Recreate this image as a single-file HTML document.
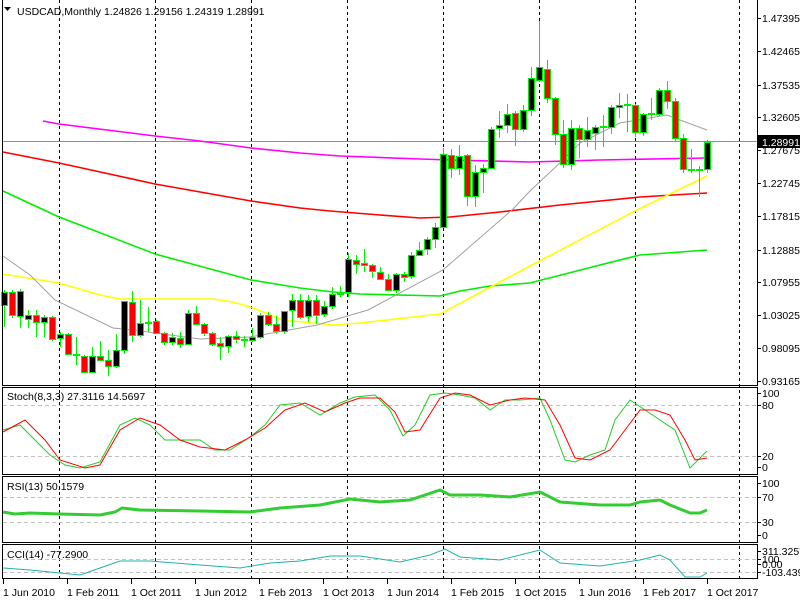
<!DOCTYPE html>
<html><head><meta charset="utf-8"><style>
html,body{margin:0;padding:0;background:#fff;width:800px;height:600px;overflow:hidden}
svg{display:block}
text{font-family:"Liberation Sans",sans-serif;font-size:10.5px;fill:#000}
</style></head><body>
<svg id="s" width="800" height="600" xmlns="http://www.w3.org/2000/svg">
<rect width="800" height="600" fill="#fff"/>
<g id="grid"></g>
<g id="plots"></g>
<g id="cand"></g>
<g stroke="#000" stroke-width="1" fill="none" shape-rendering="crispEdges">
<line x1="2.5" y1="0" x2="2.5" y2="385"/>
<line x1="757.5" y1="0" x2="757.5" y2="385"/>
<line x1="2" y1="385.5" x2="758" y2="385.5"/>
<rect x="2.5" y="387.5" width="755" height="87"/>
<rect x="2.5" y="476.5" width="755" height="66"/>
<rect x="2.5" y="544.5" width="755" height="34"/>
</g>
<g id="ticks" stroke="#000" shape-rendering="crispEdges"></g>
<polygon points="4,7 11,7 7.5,11" fill="#000"/>
<text x="17" y="15">USDCAD,Monthly  1.24826 1.29156 1.24319 1.28991</text>
<text x="7" y="400">Stoch(8,3,3) 27.3116 14.5697</text>
<text x="7" y="490">RSI(13) 50.1579</text>
<text x="7" y="558">CCI(14) -77.2900</text>
<g>
<text x="762" y="22">1.47395</text>
<text x="762" y="55">1.42465</text>
<text x="762" y="89">1.37535</text>
<text x="762" y="121">1.32605</text>
<text x="762" y="154">1.27675</text>
<text x="762" y="187">1.22745</text>
<text x="762" y="220">1.17815</text>
<text x="762" y="254">1.12885</text>
<text x="762" y="286">1.07955</text>
<text x="762" y="319">1.03025</text>
<text x="762" y="352">0.98095</text>
<text x="762" y="385">0.93165</text>
<rect x="758" y="135" width="42" height="13" fill="#000"/>
<text x="762" y="146" style="fill:#fff">1.28991</text>
<text x="762" y="397">100</text>
<text x="762" y="409">80</text>
<text x="762" y="460">20</text>
<text x="762" y="471">0</text>
<text x="762" y="487">100</text>
<text x="762" y="501">70</text>
<text x="762" y="526">30</text>
<text x="762" y="539">0</text>
<text x="762" y="555">311.3257</text>
<text x="762" y="563">100</text>
<text x="762" y="568">0.00</text>
<text x="762" y="576">-103.4397</text>
</g>
<g>
<text x="3" y="596">1 Jun 2010</text>
<text x="67" y="596">1 Feb 2011</text>
<text x="131" y="596">1 Oct 2011</text>
<text x="195" y="596">1 Jun 2012</text>
<text x="259" y="596">1 Feb 2013</text>
<text x="323" y="596">1 Oct 2013</text>
<text x="387" y="596">1 Jun 2014</text>
<text x="451" y="596">1 Feb 2015</text>
<text x="515" y="596">1 Oct 2015</text>
<text x="579" y="596">1 Jun 2016</text>
<text x="643" y="596">1 Feb 2017</text>
<text x="707" y="596">1 Oct 2017</text>
</g>
</svg>
<script>
var NS="http://www.w3.org/2000/svg";
function el(p,t,a){var e=document.createElementNS(NS,t);for(var k in a)e.setAttribute(k,a[k]);document.getElementById(p).appendChild(e);return e;}
function pl(p,pts,c,w){el(p,"polyline",{points:pts.map(function(q){return q.join(",")}).join(" "),fill:"none",stroke:c,"stroke-width":w||1});}
[59,155,251,347,443,539,635,739].forEach(function(x){el("grid","line",{x1:x+.5,y1:0,x2:x+.5,y2:579,stroke:"#000","stroke-dasharray":"3,3","shape-rendering":"crispEdges"});});
[405,456,497,522,559,572].forEach(function(y){el("grid","line",{x1:3,y1:y+.5,x2:757,y2:y+.5,stroke:"#c0c0c0","stroke-dasharray":"4,3","shape-rendering":"crispEdges"});});
el("grid","line",{x1:3,y1:141.5,x2:800,y2:141.5,stroke:"#8a9096","shape-rendering":"crispEdges"});
for(var k=0;k<12;k++){var x=3+64*k+.5;el("ticks","line",{x1:x,y1:579,x2:x,y2:584});}
[18,51,85,117,150,183,216,250,282,315,348,381,393,405,456,467,483,497,522,535,551,559,564,572].forEach(function(y){el("ticks","line",{x1:757,y1:y+.5,x2:761,y2:y+.5});});
pl("plots",[[43,121],[59,124],[155,136],[200,141],[251,148],[300,153],[340,156],[420,159],[450,160],[530,162],[600,160],[707,158]],"#ff00ff",1.6);
pl("plots",[[3,152],[59,163],[155,184],[251,201],[300,208],[330,211],[380,215],[420,218],[450,217],[500,212],[560,205],[640,197],[707,193]],"#ff0000",1.6);
pl("plots",[[3,191],[59,217],[80,225],[155,254],[251,280],[300,288],[333,292],[360,294],[440,296],[460,291],[490,286],[530,283],[600,265],[640,255],[707,250]],"#00ee00",1.6);
pl("plots",[[3,274],[59,283],[100,295],[120,299],[213,299],[233,302],[253,308],[283,320],[333,325],[360,323],[440,314],[530,266],[637,210],[707,176]],"#ffff00",1.6);
pl("plots",[[3,256],[30,275],[55,300],[113,328],[133,330],[200,339],[250,337],[317,325],[368,310],[443,270],[513,209],[530,191],[563,160],[580,143],[620,123],[667,115],[680,120],[707,130]],"#a0a0a0",1);
var C=[[1,292,305,290,327],[0,292,315,290,318],[1,291,316,289,328],[1,315,319,310,328],[0,315,322,310,337],[1,317,322,315,337],[0,317,339,316,341],[1,334,338,332,347],[0,334,354,333,355],[2,354,356,337,365],
[0,356,372,355,373],[1,356,372,347,373],[0,356,360,341,361],[0,360,366,350,376],[1,350,366,334,368],[1,301,350,301,354],[0,302,335,291,342],[1,323,335,300,337],[2,322,323,307,332],[0,321,333,320,334],
[0,333,342,332,345],[1,337,342,333,345],[0,338,344,332,348],[1,313,344,310,345],[0,313,324,306,325],[0,324,333,323,336],[0,333,344,332,346],[0,343,346,337,360],[1,336,346,335,353],[0,336,339,331,343],
[2,339,340,336,347],[1,337,340,328,342],[1,315,337,313,339],[0,315,324,312,326],[0,324,331,316,334],[1,311,331,311,334],[1,300,310,294,327],[0,300,317,294,319],[1,300,316,295,322],[0,300,315,295,324],
[1,306,314,301,317],[1,294,306,287,309],[2,293,294,286,297],[1,259,292,253,297],[0,260,264,255,274],[0,263,265,249,272],[0,265,271,264,278],[0,272,279,267,280],[0,279,290,274,291],[1,274,290,273,293],
[0,274,277,272,282],[1,255,276,252,279],[1,250,255,242,256],[1,239,249,237,255],[1,227,239,223,248],[1,154,227,148,228],[0,155,168,149,178],[1,156,168,145,175],[0,155,196,154,206],[1,172,196,165,207],
[1,168,172,164,193],[1,129,168,127,169],[1,125,128,111,138],[1,114,125,104,133],[0,113,129,111,146],[1,110,129,105,132],[1,78,110,67,116],[1,67,80,21,82],[0,69,98,60,103],[0,98,134,97,145],
[0,134,164,120,168],[1,128,164,120,170],[0,128,139,125,158],[1,130,139,117,147],[1,127,133,125,150],[2,126,127,115,147],[1,107,127,105,134],[1,105,107,93,118],[2,104,106,94,132],[0,105,132,104,137],
[1,114,132,113,136],[2,113,115,98,120],[1,90,114,88,116],[0,90,101,81,109],[0,101,138,98,141],[0,138,169,134,173],[2,169,170,149,173],[2,169,170,166,197],[1,142,169,140,173]];
C.forEach(function(c,i){var x=Math.round(4+7.99*i);
el("cand","line",{x1:x+.5,y1:c[3],x2:x+.5,y2:c[4],stroke:"#00ee00","shape-rendering":"crispEdges"});
var h=Math.max(c[2]-c[1],1);
if(c[0]==2){el("cand","rect",{x:x-3,y:c[1],width:7,height:2,fill:"#00ee00","shape-rendering":"crispEdges"});}
else el("cand","rect",{x:x-2.5,y:c[1]+.5,width:6,height:h,fill:c[0]?"#000":"#ff0000",stroke:"#00ee00","stroke-width":1,"shape-rendering":"crispEdges"});
});
pl("plots",[[3,430],[20,425],[35,440],[50,455],[65,465],[80,468],[100,462],[120,425],[135,418],[150,425],[165,440],[180,440],[200,440],[215,450],[230,450],[250,437],[265,425],[280,405],[300,403],[320,415],[340,403],[355,397],[375,395],[390,410],[403,436],[415,425],[430,395],[445,393],[460,395],[475,398],[490,410],[505,400],[520,400],[540,398],[550,420],[565,460],[575,462],[590,455],[605,450],[615,420],[630,400],[645,410],[660,420],[675,430],[690,468],[707,451]],"#22cc22",1);
pl("plots",[[3,432],[25,420],[45,440],[60,460],[85,468],[100,465],[120,430],[140,418],[160,425],[180,440],[200,447],[225,450],[245,440],[265,428],[285,410],[305,403],[325,412],[345,403],[360,398],[380,398],[395,412],[405,432],[420,430],[440,398],[455,393],[470,395],[490,405],[510,400],[525,398],[545,400],[560,425],[575,458],[590,460],[610,450],[625,430],[640,410],[655,410],[670,415],[685,440],[695,460],[707,458]],"#ff0000",1);
pl("plots",[[3,512],[15,514],[30,513],[60,514],[100,515],[115,512],[122,508],[140,510],[200,511],[250,512],[280,508],[320,505],[350,499],[380,502],[410,500],[440,490],[450,495],[480,495],[510,497],[540,492],[560,502],[600,505],[630,505],[640,502],[660,500],[670,505],[690,513],[700,513],[707,510]],"#33cc33",3);
pl("plots",[[3,568],[30,570],[60,573],[80,575],[100,568],[120,561],[150,561],[200,565],[240,568],[270,563],[300,561],[330,556],[360,556],[400,562],[430,555],[445,549],[460,557],[500,560],[540,550],[560,563],[600,566],[640,560],[660,555],[670,560],[685,577],[700,577],[707,573]],"#20b2aa",1);
</script>
</body></html>
